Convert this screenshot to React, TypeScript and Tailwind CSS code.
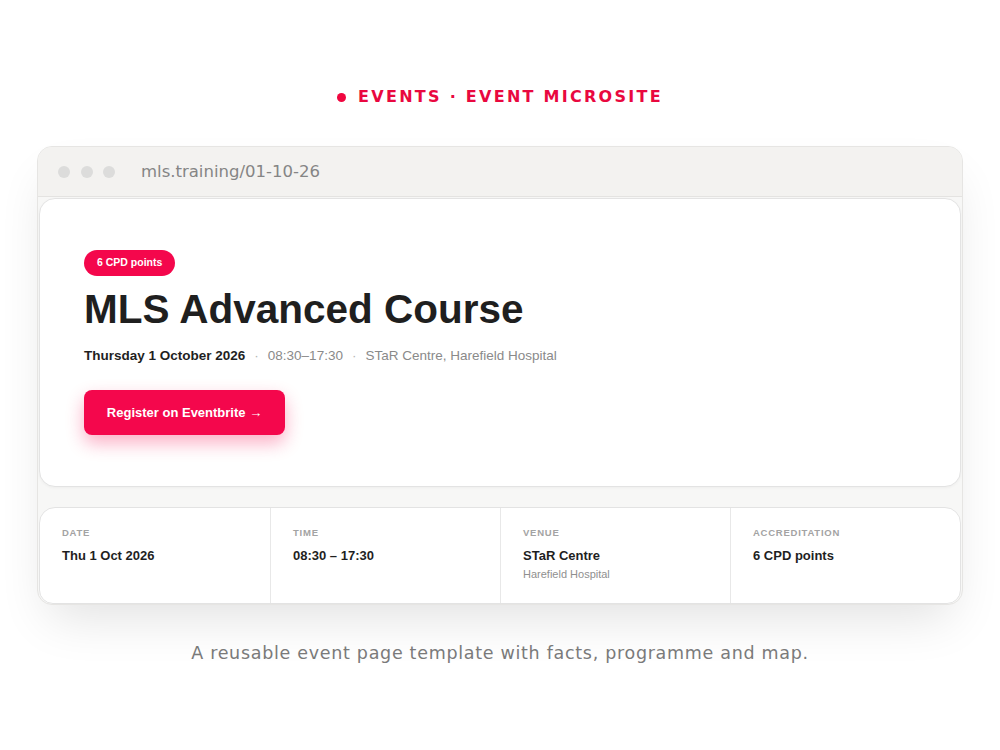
import React from "react";

const RED = "#f4074c";

const facts = [
  { label: "Date", value: "Thu 1 Oct 2026" },
  { label: "Time", value: "08:30 – 17:30" },
  { label: "Venue", value: "STaR Centre", sub: "Harefield Hospital" },
  { label: "Accreditation", value: "6 CPD points" },
];

export default function App() {
  return (
    <div className="w-[1000px] h-[750px] bg-white flex flex-col items-center overflow-hidden">
      {/* Eyebrow */}
      <div
        className="mt-[87px] flex items-center gap-[12px] text-[16px] font-semibold tracking-[0.142em] text-[#e9083f] leading-5"
        style={{ fontFamily: '"DejaVu Sans", "Open Sans", sans-serif' }}
      >
        <span className="w-[9px] h-[9px] rounded-full bg-[#f0063f]" />
        <span>EVENTS · EVENT MICROSITE</span>
      </div>

      {/* Browser window */}
      <div className="mt-[39px] w-[926px] rounded-[15px] border border-[#e6e5e3] bg-[#f7f7f6] shadow-[0_24px_50px_-12px_rgba(0,0,0,0.12)] overflow-hidden">
        <div className="h-[50px] bg-[#f3f2f0] border-b border-[#e4e3e1] flex items-center pl-[20px]">
          <div className="flex gap-[10.5px]">
            <span className="w-[12px] h-[12px] rounded-full bg-[#dcdcdb]" />
            <span className="w-[12px] h-[12px] rounded-full bg-[#dcdcdb]" />
            <span className="w-[12px] h-[12px] rounded-full bg-[#dcdcdb]" />
          </div>
          <span
            className="ml-[26px] mt-[2px] text-[16.5px] text-[#858585]"
            style={{ fontFamily: '"DejaVu Sans", "Open Sans", sans-serif' }}
          >
            mls.training/01-10-26
          </span>
        </div>

        <div
          className="px-[1px] pt-[1px] flex flex-col gap-[20px]"
          style={{ fontFamily: '"Liberation Sans", Arial, sans-serif' }}
        >
          {/* Hero */}
          <div className="h-[289px] rounded-[16px] bg-white border border-[#e3e3e3] pl-[44px] pt-[50px] shadow-[0_1px_3px_rgba(0,0,0,0.04)]">
            <span
              className="inline-flex items-center h-[26px] px-[13px] rounded-full text-[10.5px] font-bold text-white"
              style={{ backgroundColor: RED }}
            >
              6 CPD points
            </span>
            <h1 className="mt-[10px] text-[40.5px] leading-[46px] font-bold text-[#1f1f1f]">
              MLS Advanced Course
            </h1>
            <div className="mt-[14px] text-[13.5px] text-[#8a8a8a] flex items-center gap-[9px]">
              <span className="font-bold text-[#1f1f1f]">Thursday 1 October 2026</span>
              <span className="text-[#b5b5b5]">·</span>
              <span>08:30–17:30</span>
              <span className="text-[#b5b5b5]">·</span>
              <span>STaR Centre, Harefield Hospital</span>
            </div>
            <button
              className="mt-[24px] h-[45px] w-[201px] rounded-[8px] text-white text-[13px] font-bold shadow-[0_8px_18px_rgba(244,7,76,0.32)]"
              style={{ backgroundColor: RED }}
            >
              Register on Eventbrite →
            </button>
          </div>

          {/* Facts */}
          <div className="h-[97px] rounded-t-[16px] rounded-b-[14px] bg-white border border-[#e3e3e3] grid grid-cols-4">
            {facts.map((f, i) => (
              <div
                key={f.label}
                className={`pl-[22px] pt-[18px] ${i > 0 ? "border-l border-[#e8e8e8]" : ""}`}
              >
                <div className="text-[9.5px] font-bold uppercase tracking-[0.08em] text-[#a3a3a3]">
                  {f.label}
                </div>
                <div className="mt-[6px] text-[13px] font-bold text-[#1f1f1f]">{f.value}</div>
                {f.sub && <div className="mt-0 text-[11px] text-[#8f8f8f]">{f.sub}</div>}
              </div>
            ))}
          </div>
        </div>
      </div>

      {/* Caption */}
      <p
        className="mt-[35px] text-[17.5px] text-[#7a7a7a] tracking-[0.04em]"
        style={{ fontFamily: '"DejaVu Sans", "Open Sans", sans-serif' }}
      >
        A reusable event page template with facts, programme and map.
      </p>
    </div>
  );
}
